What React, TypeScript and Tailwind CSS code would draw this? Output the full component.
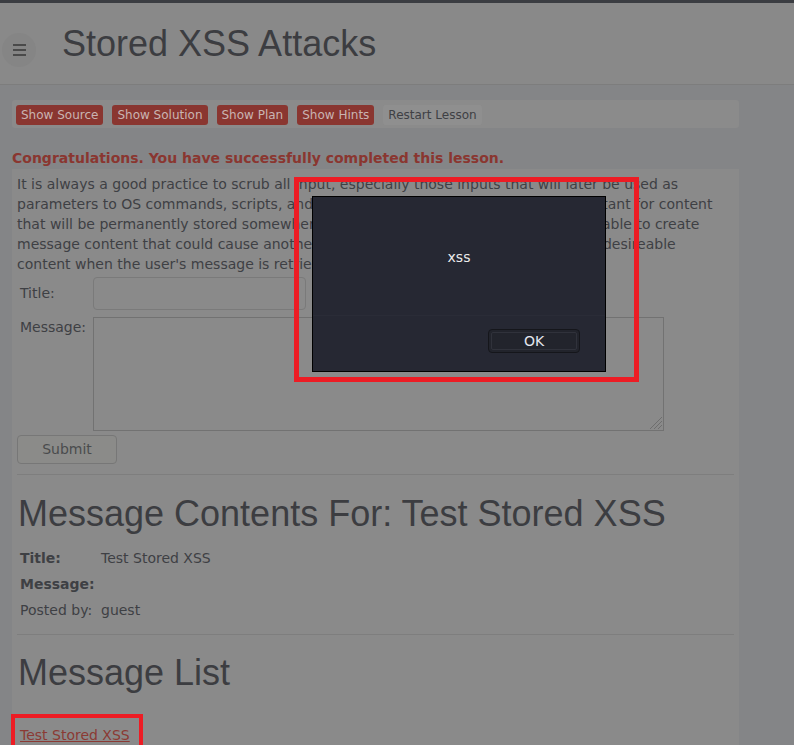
import React from "react";

const sans = "font-['DejaVu_Sans','Liberation_Sans',sans-serif]";
const heading = "font-['Liberation_Sans',Arial,sans-serif]";

function LessonButton({ label, plain }: { label: string; plain?: boolean }) {
  return (
    <span
      className={
        plain
          ? "h-[20px] px-[5px] rounded-[3px] bg-[#8f8f8f] text-[#3e4044] text-[12px] leading-[20px]"
          : "h-[20px] px-[5px] rounded-[3px] bg-[#8a3630] text-[#c9b4b2] text-[12px] leading-[20px]"
      }
    >
      {label}
    </span>
  );
}

export default function App() {
  return (
    <div className={`relative w-[794px] h-[745px] overflow-hidden bg-[#848587] ${sans}`}>
      {/* window strip */}
      <div className="h-[3px] bg-[#3b3d42]" />

      {/* header */}
      <div className="h-[82px] bg-[#898989] border-b border-[#7d7d7d] flex items-start">
        <div className="ml-[2px] mt-[30px] w-[34px] h-[34px] rounded-full bg-[#858585] flex flex-col items-center justify-center gap-[3px]">
          <span className="block w-[13px] h-[2px] bg-[#4a4a4a]" />
          <span className="block w-[13px] h-[2px] bg-[#4a4a4a]" />
          <span className="block w-[13px] h-[2px] bg-[#4a4a4a]" />
        </div>
        <h1 className={`ml-[26px] mt-[21px] text-[36px] leading-[40px] text-[#3c3d41] ${heading}`}>
          Stored XSS Attacks
        </h1>
      </div>

      <div className="ml-[12px] w-[727px]">
        {/* lesson buttons */}
        <div className="mt-[15px] h-[28px] rounded-[3px] bg-[#8b8b8b] px-[4px] pt-[1px] flex items-center gap-[9px]">
          <LessonButton label="Show Source" />
          <LessonButton label="Show Solution" />
          <LessonButton label="Show Plan" />
          <LessonButton label="Show Hints" />
          <LessonButton label="Restart Lesson" plain />
        </div>

        <p className="mt-[21px] text-[14px] leading-[18px] font-bold text-[#8a3630]">
          Congratulations. You have successfully completed this lesson.
        </p>

        {/* lesson content */}
        <div className="mt-[2px] bg-[#8a8a8a] pl-[5px] pr-[5px] pt-[5px] h-[600px] text-[#3e4044]">
          <p className="text-[14px] leading-[20px] pr-[4px]">
            It is always a good practice to scrub all input, especially those inputs that will later be used as
            parameters to OS commands, scripts, and database queries. It is particularly important for content
            that will be permanently stored somewhere in the application. Users should not be able to create
            message content that could cause another user to load an undesireable page or undesireable
            content when the user's message is retrieved.
          </p>

          <div className="mt-[3px] flex items-center text-[14px]">
            <span className="w-[76px] pl-[3px]">Title:</span>
            <div className="w-[213px] h-[33px] rounded-[4px] border border-[#7a7a7a] bg-[#8a8a8a]" />
          </div>
          <div className="mt-[7px] flex items-start text-[14px] leading-[20px]">
            <span className="w-[76px] pl-[3px]">Message:</span>
            <div className="relative w-[571px] h-[114px] border border-[#727272] bg-[#8a8a8a]">
              <svg className="absolute right-0 bottom-0" width="14" height="14" viewBox="0 0 14 14">
                <path d="M13 1 L1 13 M13 5 L5 13 M13 9 L9 13" stroke="#6e6e6e" strokeWidth="1" />
              </svg>
            </div>
          </div>
          <button className="mt-[4px] w-[100px] h-[29px] rounded-[4px] border border-[#777777] bg-[#8b8b89] text-[14px] text-[#4a4b4d]">
            Submit
          </button>

          <div className="mt-[10px] h-px w-[717px] bg-[#7e7e7e]" />

          <h2 className={`mt-[19px] pl-[1px] text-[36px] leading-[40px] text-[#3c3d41] ${heading}`}>
            Message Contents For: Test Stored XSS
          </h2>
          <div className="mt-[11px] text-[14px] leading-[26px]">
            <div className="flex">
              <span className="w-[84px] pl-[3px] font-bold">Title:</span>
              <span>Test Stored XSS</span>
            </div>
            <div className="flex">
              <span className="w-[84px] pl-[3px] font-bold">Message:</span>
            </div>
            <div className="flex">
              <span className="w-[84px] pl-[3px]">Posted by:</span>
              <span>guest</span>
            </div>
          </div>

          <div className="mt-[11px] h-px w-[717px] bg-[#7e7e7e]" />

          <h2 className={`mt-[18px] pl-[1px] text-[36px] leading-[40px] text-[#3c3d41] ${heading}`}>
            Message List
          </h2>
          <a className="mt-[32px] ml-[3px] block text-[14px] leading-[20px] text-[#8b3a34] underline">
            Test Stored XSS
          </a>
        </div>
      </div>

      {/* alert dialog */}
      <div className="absolute left-[312px] top-[196px] w-[294px] h-[176px] border border-black bg-[#262833] flex flex-col">
        <div className="h-[119px] flex items-start justify-center pt-[50px] text-[14px] text-[#ececec] border-b border-[#2a2c37]">
          xss
        </div>
        <div className="flex justify-end pr-[25px] pt-[13px]">
          <div className="w-[92px] h-[24px] rounded-[4px] border border-[#15161b] bg-[#22242c] p-[2px]">
            <div className="h-full border border-[#30323b] rounded-[2px] flex items-center justify-center text-[14px] text-[#e4e6ee]">
              OK
            </div>
          </div>
        </div>
      </div>

      {/* annotation frames */}
      <div className="absolute left-[294px] top-[177px] w-[345px] h-[205px] border-[5px] border-[#ed1c24]" />
      <div className="absolute left-[11px] top-[714px] w-[132px] h-[40px] border-[4px] border-[#ed1c24]" />
    </div>
  );
}
